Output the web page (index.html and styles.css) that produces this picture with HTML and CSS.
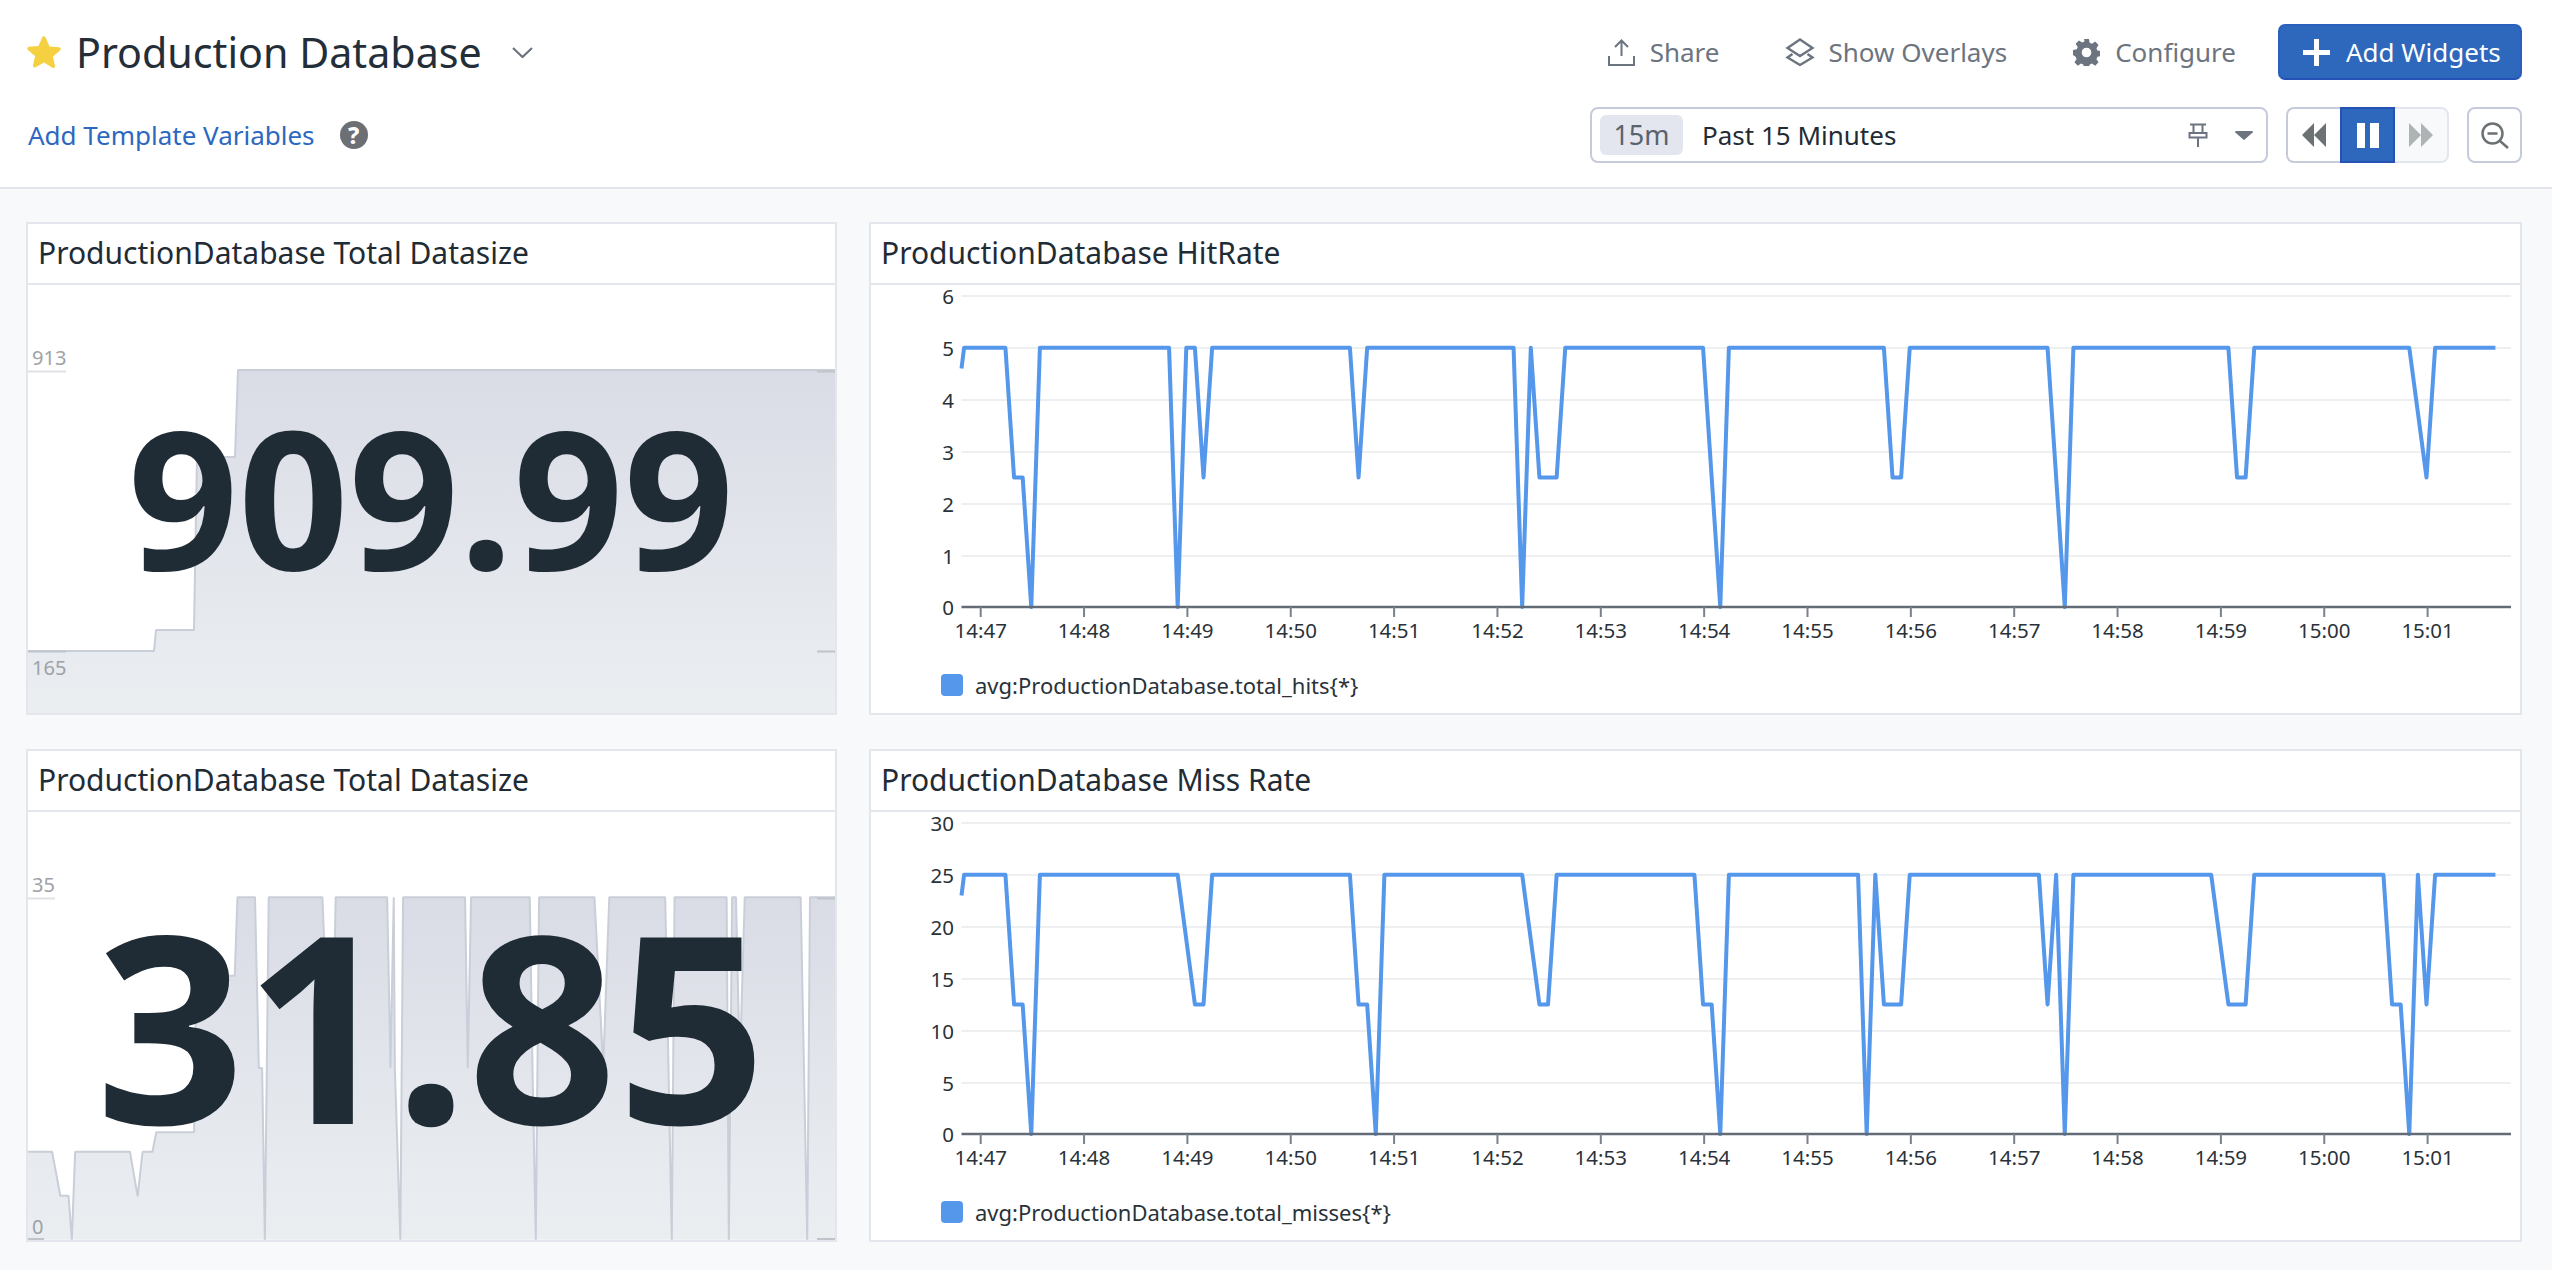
FILE: index.html
```html
<!DOCTYPE html>
<html lang="en">
<head>
<meta charset="utf-8">
<title>Production Database</title>
<link rel="stylesheet" href="styles.css">
</head>
<body>
<header class="topbar">
  <div class="row">
    <div class="title-group">
      <svg class="star" viewBox="0 0 36 34"><path d="M18 1.500c.8 0 1.400.5 1.700 1.200l3.800 8.700 9.600.9c1.600.2 2.200 2.100 1 3.100l-7.200 6.200 2.100 9.200c.4 1.600-1.300 2.700-2.600 1.900L18 27.400l-8.400 4.800c-1.400.8-3-.3-2.600-1.900l2.100-9.200-7.200-6.200c-1.200-1-.6-2.900 1-3.100l9.600-.9 3.800-8.700c.3-.7.900-1.200 1.700-1.200z"/></svg>
      <h1 class="title">Production Database</h1>
      <svg class="chevron" viewBox="0 0 21 11"><path d="M1 1l9.500 9L20 1"/></svg>
    </div>
    <div class="actions">
      <button class="action action-share">
        <svg class="ico ico-share" viewBox="0 0 27 27"><path d="M1 17v9h25v-9M13.500 17V1.500M7 8l6.500-6.500L20 8"/></svg>
        <span>Share</span>
      </button>
      <button class="action action-overlays">
        <svg class="ico ico-overlays" viewBox="0 0 30 28"><path d="M15 1.500L27.500 10 15 18 2.500 10zM7.500 16l-5 3.500L15 27l12.500-7.500-5-3.500"/></svg>
        <span>Show Overlays</span>
      </button>
      <button class="action action-configure">
        <svg class="ico ico-gear" viewBox="0 0 28 28"><path class="gear" fill-rule="evenodd" d="M11.500 0h5l.8 3.900 2.400 1 3.300-2.200 3.500 3.500-2.200 3.300 1 2.400 3.900.8v5l-3.900.8-1 2.400 2.200 3.300-3.500 3.500-3.300-2.200-2.400 1-.8 3.900h-5l-.8-3.900-2.400-1-3.300 2.200-3.500-3.500 2.200-3.300-1-2.400L0 16.500v-5l3.900-.8 1-2.400-2.200-3.300 3.500-3.500 3.300 2.200 2.400-1zM14 9a5 5 0 1 0 0 10 5 5 0 0 0 0-10z"/></svg>
        <span>Configure</span>
      </button>
      <button class="add-widgets">
        <svg class="plus" viewBox="0 0 27 27"><path d="M13.500 0v27M0 13.500h27"/></svg>
        <span>Add Widgets</span>
      </button>
    </div>
  </div>
  <div class="row">
    <div class="vars">
      <a class="vars-link">Add Template Variables</a>
      <span class="help">?</span>
    </div>
    <div class="time-controls">
      <div class="picker">
        <span class="chip">15m</span>
        <span class="range">Past 15 Minutes</span>
        <svg class="pin" viewBox="0 0 20 24"><path d="M2 1.500h16M5.500 1.500V10M14.500 1.500V10M1.500 10h17v4.500h-17zM10 14.500V24"/></svg>
        <svg class="caret" viewBox="0 0 18 9"><path d="M1 0h16c.8 0 1.200.9.700 1.500L9.700 8.600c-.4.400-1 .4-1.400 0L.3 1.500C-.2.900.2 0 1 0z"/></svg>
      </div>
      <div class="playback">
        <span class="pb pb-back"><svg class="arrows" viewBox="0 0 24 24"><path d="M12 0v24L0 12zM24 0v24L12 12z"/></svg></span>
        <span class="pb pb-pause"><span class="bar"></span><span class="bar"></span></span>
        <span class="pb pb-next"><svg class="arrows" viewBox="0 0 24 24"><path d="M0 0v24l12-12zM12 0v24l12-12z"/></svg></span>
      </div>
      <button class="zoom-out">
        <svg class="mag" viewBox="0 0 28 27"><path d="M11.500 1.500a10 10 0 1 0 0 20 10 10 0 0 0 0-20zM19 19l8 7M6.500 11.500h10"/></svg>
      </button>
    </div>
  </div>
</header>

<main class="board">
  <section class="card">
    <h2 class="card-title">ProductionDatabase Total Datasize</h2>
    <div class="card-body spark-body">
      <svg class="fill" viewBox="28 285 807 428">
        <defs>
          <linearGradient id="areaA" x1="0" y1="0" x2="0" y2="1"><stop offset="0" stop-color="#d9dce5"/><stop offset="1" stop-color="#ebeef1"/></linearGradient>
        </defs>
        <path class="area" d="M28 651H154L156 630H194L197 457H235L238 370H835V713H28Z"/>
        <polyline class="spark-line" points="28,651 154,651 156,630 194,630 197,457 235,457 238,370 835,370"/>
        <line class="spark-tick" x1="28" x2="66" y1="371.500" y2="371.500"/>
        <line class="spark-tick-d" x1="817" x2="835" y1="371.500" y2="371.500"/>
        <line class="spark-tick-d" x1="28" x2="66" y1="651.500" y2="651.500"/>
        <line class="spark-tick-d" x1="817" x2="835" y1="651.500" y2="651.500"/>
        <text class="spark-label" x="32" y="365">913</text>
        <text class="spark-label" x="32" y="675">165</text>
      </svg>
      <div class="big big-a">909.99</div>
    </div>
  </section>

  <section class="card">
    <h2 class="card-title">ProductionDatabase HitRate</h2>
    <div class="card-body chart-body">
      <svg class="plot" viewBox="871 285 1649 374">
        <g class="grid">
          <line x1="961.500" x2="2511" y1="296" y2="296"/>
          <line x1="961.500" x2="2511" y1="348" y2="348"/>
          <line x1="961.500" x2="2511" y1="400" y2="400"/>
          <line x1="961.500" x2="2511" y1="452" y2="452"/>
          <line x1="961.500" x2="2511" y1="504" y2="504"/>
          <line x1="961.500" x2="2511" y1="556" y2="556"/>
        </g>
        <g class="y-labels">
          <text x="954" y="296">6</text><text x="954" y="348">5</text><text x="954" y="400">4</text><text x="954" y="452">3</text><text x="954" y="504">2</text><text x="954" y="556">1</text><text x="954" y="607">0</text>
        </g>
        <g transform="translate(979.6 607) scale(8.6125 -51.83)">
          <polyline class="series" points="-2.100,4.600 -1.800,5 3,5 4,2.500 5,2.500 6,0 7,5 22,5 23,0 24,5 25,5 26,2.500 27,5 43,5 44,2.500 45,5 62,5 63,0 64,5 65,2.500 67,2.500 68,5 84,5 86,0 87,5 105,5 106,2.500 107,2.500 108,5 124,5 126,0 127,5 145,5 146,2.500 147,2.500 148,5 166,5 168,2.500 169,5 176,5"/>
        </g>
        <line class="axis" x1="961.500" x2="2511" y1="607" y2="607"/>
        <g class="ticks">
          <line x1="980.700" x2="980.700" y1="607" y2="617"/><line x1="1084.050" x2="1084.050" y1="607" y2="617"/><line x1="1187.400" x2="1187.400" y1="607" y2="617"/><line x1="1290.750" x2="1290.750" y1="607" y2="617"/><line x1="1394.100" x2="1394.100" y1="607" y2="617"/><line x1="1497.450" x2="1497.450" y1="607" y2="617"/><line x1="1600.800" x2="1600.800" y1="607" y2="617"/><line x1="1704.150" x2="1704.150" y1="607" y2="617"/><line x1="1807.500" x2="1807.500" y1="607" y2="617"/><line x1="1910.850" x2="1910.850" y1="607" y2="617"/><line x1="2014.200" x2="2014.200" y1="607" y2="617"/><line x1="2117.550" x2="2117.550" y1="607" y2="617"/><line x1="2220.900" x2="2220.900" y1="607" y2="617"/><line x1="2324.250" x2="2324.250" y1="607" y2="617"/><line x1="2427.600" x2="2427.600" y1="607" y2="617"/>
        </g>
        <g class="x-labels">
          <text x="980.700" y="630">14:47</text><text x="1084.050" y="630">14:48</text><text x="1187.400" y="630">14:49</text><text x="1290.750" y="630">14:50</text><text x="1394.100" y="630">14:51</text><text x="1497.450" y="630">14:52</text><text x="1600.800" y="630">14:53</text><text x="1704.150" y="630">14:54</text><text x="1807.500" y="630">14:55</text><text x="1910.850" y="630">14:56</text><text x="2014.200" y="630">14:57</text><text x="2117.550" y="630">14:58</text><text x="2220.900" y="630">14:59</text><text x="2324.250" y="630">15:00</text><text x="2427.600" y="630">15:01</text>
        </g>
      </svg>
      <div class="legend"><span class="swatch"></span><span>avg:ProductionDatabase.total_hits{*}</span></div>
    </div>
  </section>

  <section class="card">
    <h2 class="card-title">ProductionDatabase Total Datasize</h2>
    <div class="card-body spark-body">
      <svg class="fill" viewBox="28 812 807 428">
        <g transform="translate(0 740) scale(.5484 .33807)">
          <path class="area" d="M50 1218L95 1218 110 1348 125 1348 131 1478 137 1218 237 1218 251 1350 260 1218 278 1218 285 1160 354 1160 358 697 428 697 433 465 465 465 472 970 478 970 483 1478 490 465 588 465 600 970 607 970 612 465 706 465 712 970 718 465 720 970 730 1478 735 465 848 465 853 970 859 465 966 465 971 970 977 1478 983 465 1084 465 1100 970 1111 465 1213 465 1225 1478 1230 465 1325 465 1329 1478 1335 465 1342 465 1349 970 1358 465 1460 465 1466 970 1472 1478 1477 465 1524 465 1524 1478 50 1478Z"/>
          <polyline class="spark-line" points="50,1218 95,1218 110,1348 125,1348 131,1478 137,1218 237,1218 251,1350 260,1218 278,1218 285,1160 354,1160 358,697 428,697 433,465 465,465 472,970 478,970 483,1478 490,465 588,465 600,970 607,970 612,465 706,465 712,970 718,465 720,970 730,1478 735,465 848,465 853,970 859,465 966,465 971,970 977,1478 983,465 1084,465 1100,970 1111,465 1213,465 1225,1478 1230,465 1325,465 1329,1478 1335,465 1342,465 1349,970 1358,465 1460,465 1466,970 1472,1478 1477,465 1524,465"/>
        </g>
        <line class="spark-tick" x1="28" x2="55" y1="898.500" y2="898.500"/>
        <line class="spark-tick-d" x1="817" x2="835" y1="898.500" y2="898.500"/>
        <line class="spark-tick-d" x1="28" x2="44" y1="1239" y2="1239"/>
        <line class="spark-tick-d" x1="817" x2="835" y1="1239" y2="1239"/>
        <text class="spark-label" x="32" y="892">35</text>
        <text class="spark-label" x="32" y="1234">0</text>
      </svg>
      <div class="big big-b">31.85</div>
    </div>
  </section>

  <section class="card">
    <h2 class="card-title">ProductionDatabase Miss Rate</h2>
    <div class="card-body chart-body">
      <svg class="plot" viewBox="871 812 1649 374">
        <g class="grid">
          <line x1="961.500" x2="2511" y1="823" y2="823"/>
          <line x1="961.500" x2="2511" y1="875" y2="875"/>
          <line x1="961.500" x2="2511" y1="927" y2="927"/>
          <line x1="961.500" x2="2511" y1="979" y2="979"/>
          <line x1="961.500" x2="2511" y1="1031" y2="1031"/>
          <line x1="961.500" x2="2511" y1="1083" y2="1083"/>
        </g>
        <g class="y-labels">
          <text x="954" y="823">30</text><text x="954" y="875">25</text><text x="954" y="927">20</text><text x="954" y="979">15</text><text x="954" y="1031">10</text><text x="954" y="1083">5</text><text x="954" y="1134">0</text>
        </g>
        <g transform="translate(979.6 1134) scale(8.6125 -10.366)">
          <polyline class="series" points="-2.100,23 -1.800,25 3,25 4,12.500 5,12.500 6,0 7,25 23,25 25,12.500 26,12.500 27,25 43,25 44,12.500 45,12.500 46,0 47,25 63,25 65,12.500 66,12.500 67,25 83,25 84,12.500 85,12.500 86,0 87,25 102,25 103,0 104,25 105,12.500 107,12.500 108,25 123,25 124,12.500 125,25 126,0 127,25 143,25 145,12.500 147,12.500 148,25 163,25 164,12.500 165,12.500 166,0 167,25 168,12.500 169,25 176,25"/>
        </g>
        <line class="axis" x1="961.500" x2="2511" y1="1134" y2="1134"/>
        <g class="ticks">
          <line x1="980.700" x2="980.700" y1="1134" y2="1144"/><line x1="1084.050" x2="1084.050" y1="1134" y2="1144"/><line x1="1187.400" x2="1187.400" y1="1134" y2="1144"/><line x1="1290.750" x2="1290.750" y1="1134" y2="1144"/><line x1="1394.100" x2="1394.100" y1="1134" y2="1144"/><line x1="1497.450" x2="1497.450" y1="1134" y2="1144"/><line x1="1600.800" x2="1600.800" y1="1134" y2="1144"/><line x1="1704.150" x2="1704.150" y1="1134" y2="1144"/><line x1="1807.500" x2="1807.500" y1="1134" y2="1144"/><line x1="1910.850" x2="1910.850" y1="1134" y2="1144"/><line x1="2014.200" x2="2014.200" y1="1134" y2="1144"/><line x1="2117.550" x2="2117.550" y1="1134" y2="1144"/><line x1="2220.900" x2="2220.900" y1="1134" y2="1144"/><line x1="2324.250" x2="2324.250" y1="1134" y2="1144"/><line x1="2427.600" x2="2427.600" y1="1134" y2="1144"/>
        </g>
        <g class="x-labels">
          <text x="980.700" y="1157">14:47</text><text x="1084.050" y="1157">14:48</text><text x="1187.400" y="1157">14:49</text><text x="1290.750" y="1157">14:50</text><text x="1394.100" y="1157">14:51</text><text x="1497.450" y="1157">14:52</text><text x="1600.800" y="1157">14:53</text><text x="1704.150" y="1157">14:54</text><text x="1807.500" y="1157">14:55</text><text x="1910.850" y="1157">14:56</text><text x="2014.200" y="1157">14:57</text><text x="2117.550" y="1157">14:58</text><text x="2220.900" y="1157">14:59</text><text x="2324.250" y="1157">15:00</text><text x="2427.600" y="1157">15:01</text>
        </g>
      </svg>
      <div class="legend"><span class="swatch"></span><span>avg:ProductionDatabase.total_misses{*}</span></div>
    </div>
  </section>
</main>
</body>
</html>
```
FILE: styles.css
```css
* { box-sizing: border-box; }
html, body { margin: 0; height: 100%; }
body {
  background: #f8f9fb;
  color: #1f2c35;
  font-family: "Noto Sans", "Open Sans", sans-serif;
  overflow: hidden;
}
button { font: inherit; border: 0; background: none; padding: 0; margin: 0; }

.topbar {
  height: 189px;
  background: #fff;
  border-bottom: 2px solid #e3e6ed;
  padding: 24px 30px 0 26px;
  display: flex;
  flex-direction: column;
  gap: 27px;
}
.row { display: flex; justify-content: space-between; align-items: center; height: 56px; }

.title-group { display: flex; align-items: center; }
.star { width: 36px; height: 34px; fill: #f5d040; margin-right: 14px; }
.title { margin: 0; font-size: 41.200px; font-weight: 400; color: #232e38; line-height: 56px; }
.chevron { width: 21px; height: 11px; margin-left: 30px; fill: none; stroke: #6c7480; stroke-width: 2.200; }

.actions { display: flex; align-items: center; height: 56px; }
.action { display: flex; align-items: center; color: #6c7480; font-size: 26px; }
.ico { fill: none; stroke: #6c7480; stroke-width: 2; flex: none; }
.ico-share { width: 27px; height: 27px; margin-right: 15px; }
.ico-overlays { width: 30px; height: 28px; margin-right: 13px; stroke-width: 2.400; }
.ico-gear { width: 27px; height: 27px; margin-right: 15px; }
.gear { fill: #6c7480; stroke: none; }
.action-overlays { margin-left: 66px; }
.action-configure { margin-left: 66px; }
.add-widgets {
  margin-left: 42px;
  width: 244px;
  height: 56px;
  background: #2d68bd;
  border: 2px solid #2a5fbd;
  border-bottom-color: #2453b5;
  border-radius: 7px;
  color: #fff;
  font-size: 26px;
  display: flex;
  align-items: center;
  padding-left: 23px;
}
.plus { width: 27px; height: 27px; margin-right: 16px; fill: none; stroke: #fff; stroke-width: 5; }

.vars { display: flex; align-items: center; margin-left: 2px; }
.vars-link { color: #2c68c0; font-size: 26px; }
.help {
  margin-left: 25px;
  width: 28px;
  height: 28px;
  border-radius: 50%;
  background: #6c7074;
  color: #fff;
  font-size: 23px;
  font-weight: 800;
  line-height: 28px;
  text-align: center;
}

.time-controls { display: flex; align-items: stretch; height: 56px; }
.picker {
  width: 678px;
  border: 2px solid #c6cbdc;
  border-radius: 8px;
  background: #fff;
  display: flex;
  align-items: center;
  padding: 0 13px 0 8px;
}
.chip {
  width: 83px;
  height: 40px;
  background: #e3e6ee;
  border-radius: 6px;
  color: #59626d;
  font-size: 27px;
  line-height: 40px;
  text-align: center;
}
.range { flex: 1; margin-left: 19px; font-size: 26px; color: #1f2c35; }
.pin { width: 20px; height: 24px; fill: none; stroke: #6c7480; stroke-width: 2; margin-right: 27px; }
.caret { width: 18px; height: 9px; fill: #6c7480; }
.playback { display: flex; margin-left: 18px; }
.pb { width: 54px; display: flex; align-items: center; justify-content: center; }
.pb-back { border: 2px solid #c6cbdc; border-right: 0; border-radius: 8px 0 0 8px; background: #fff; }
.pb-pause { background: #2d68bd; border: 2px solid #2453b5; width: 55px; gap: 5px; }
.pb-next { border: 2px solid #e3e6ee; border-left: 0; border-radius: 0 8px 8px 0; background: #f8f9fb; }
.arrows { width: 24px; height: 24px; }
.pb-back .arrows { fill: #6c7274; }
.pb-next .arrows { fill: #aeb3b5; }
.bar { width: 8.500px; height: 25px; background: #fff; }
.zoom-out {
  margin-left: 18px;
  width: 55px;
  border: 2px solid #c6cbdc;
  border-radius: 8px;
  background: #fff;
  display: flex;
  align-items: center;
  justify-content: center;
}
.mag { width: 28px; height: 27px; fill: none; stroke: #6c7274; stroke-width: 2.500; }

.board {
  display: grid;
  grid-template-columns: 811px 1653px;
  grid-template-rows: 493px 493px;
  column-gap: 32px;
  row-gap: 34px;
  padding: 33px 0 0 26px;
}
.card { border: 2px solid #e3e6ed; background: #fff; display: flex; flex-direction: column; min-height: 0; }
.card-title {
  margin: 0;
  height: 61px;
  flex: none;
  border-bottom: 2px solid #e3e6ed;
  padding-left: 10px;
  font-size: 30px;
  font-weight: 400;
  line-height: 57px;
  color: #1f2c35;
}
.card-body { flex: 1; min-height: 0; position: relative; }
.spark-body svg.fill { display: block; width: 100%; height: 100%; }
.area { fill: url(#areaA); }
.spark-line { fill: none; stroke: #c9ced8; stroke-width: 2; vector-effect: non-scaling-stroke; stroke-linejoin: bevel; }
.spark-tick { stroke: #dfe1e5; stroke-width: 2; }
.spark-tick-d { stroke: #bfc4cb; stroke-width: 2; }
.spark-label { fill: #9da2a8; font-size: 20px; }
.big {
  position: absolute;
  inset: 0;
  display: flex;
  align-items: center;
  justify-content: center;
  font-weight: 700;
  color: #1f2c35;
  line-height: 1;
  padding-bottom: 8px;
}
.big-a { font-size: 193px; padding-right: 1px; }
.big-b { font-size: 261px; padding-right: 1px; }

.chart-body { display: flex; flex-direction: column; }
.plot { flex: 1; min-height: 0; width: 100%; display: block; overflow: visible; }
.grid line { stroke: #eeeff1; stroke-width: 2; }
.axis { stroke: #636b77; stroke-width: 2.500; }
.ticks line { stroke: #7a818c; stroke-width: 2; }
.series { fill: none; stroke: #5597ea; stroke-width: 4; vector-effect: non-scaling-stroke; stroke-linejoin: round; }
.y-labels text { fill: #2a3239; font-size: 20.500px; text-anchor: end; dominant-baseline: central; }
.x-labels text { fill: #2a3239; font-size: 20.500px; text-anchor: middle; dominant-baseline: central; }
.legend {
  flex: none;
  height: 54px;
  padding-bottom: 2px;
  display: flex;
  align-items: center;
  padding-left: 70px;
  font-size: 22px;
  color: #2a3239;
}
.swatch { width: 22px; height: 22px; border-radius: 4px; background: #5597ea; margin-right: 12px; }
```
